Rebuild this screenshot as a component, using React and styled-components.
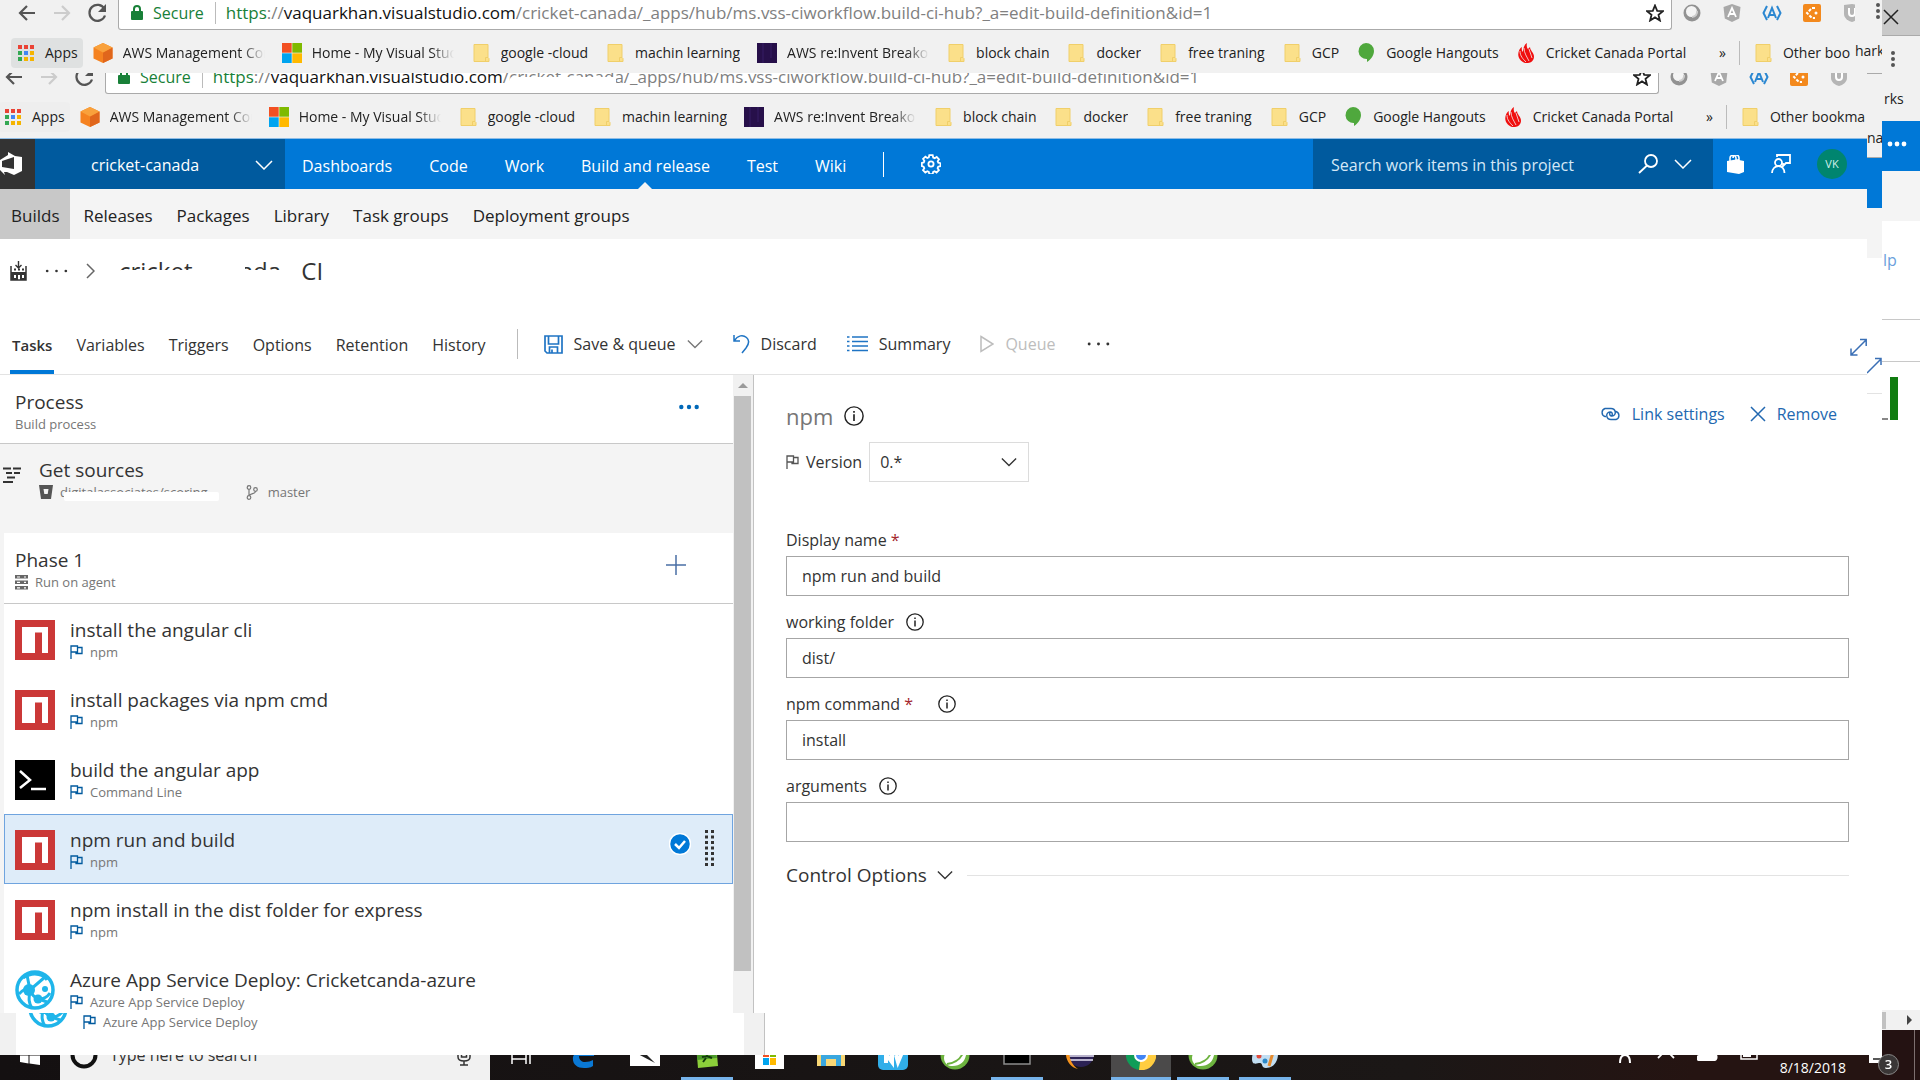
import React from "react";
import styled, { createGlobalStyle, css } from "styled-components";

const GlobalStyle = createGlobalStyle`
  *, *::before, *::after { box-sizing: border-box; }
  body { margin: 0; background: #fff; color: #333; font: 16px/22px "Open Sans", "Noto Sans", sans-serif; }
  button, input, select { font: inherit; color: inherit; }
  button { padding: 0; border: 0; background: none; display: inline-flex; align-items: center; }
  a { color: inherit; text-decoration: none; }
  svg { display: block; flex: none; }
`;

/* ---------- icons ---------- */
const Svg = ({ w = 20, h = w, box, children, ...rest }) => (
  <svg width={w} height={h} viewBox={box || `0 0 ${w} ${h}`} fill="none" stroke="currentColor" strokeWidth="1.5" aria-hidden="true" {...rest}>
    {children}
  </svg>
);
const Back = () => <Svg w={18} strokeWidth="2.2"><path d="M17 9H2M9 2 2 9l7 7" /></Svg>;
const Forward = () => <Svg w={18} strokeWidth="2.2"><path d="M1 9h15M9 2l7 7-7 7" /></Svg>;
const Reload = () => <Svg w={20} strokeWidth="2.2"><path d="M16.500 6A8 8 0 1 0 17 12.500" /><path d="M18 1v8h-8z" fill="currentColor" stroke="none" /></Svg>;
const Lock = () => <Svg w={12} h={16} stroke="none"><path d="M1 6h10a1 1 0 0 1 1 1v7a1 1 0 0 1-1 1H1a1 1 0 0 1-1-1V7a1 1 0 0 1 1-1z" fill="#188038" /><path d="M3 7V4a3 3 0 0 1 6 0v3" fill="none" stroke="#188038" strokeWidth="2" /></Svg>;
const Star = () => <Svg w={18} strokeWidth="1.800"><path d="m9 1.500 2.200 5.300 5.700.400-4.400 3.700 1.400 5.600L9 13.400l-4.900 3.100 1.400-5.600L1.100 7.200l5.700-.4z" /></Svg>;
const Dots = () => <Svg w={4} h={16} fill="currentColor" stroke="none"><circle cx="2" cy="2" r="2" /><circle cx="2" cy="8" r="2" /><circle cx="2" cy="14" r="2" /></Svg>;
const Globe = () => <Svg w={18} stroke="none"><circle cx="9" cy="9" r="8.500" fill="#929292" /><circle cx="8.500" cy="7.500" r="5.500" fill="#f4f4f4" /><path d="M9 13a5 5 0 0 0 5-6" stroke="#ccc" strokeWidth="2" fill="none" /></Svg>;
const Angular = () => <Svg w={18} stroke="none"><path d="M9 0l8.500 3-1.300 11.500L9 18l-7.200-3.500L.5 3z" fill="#a9a9a9" /><path d="M5 13 9 4l4 9M6.500 10h5" stroke="#fff" strokeWidth="1.800" /></Svg>;
const BraceA = () => <Svg w={20} h={18} stroke="#2b87d1" strokeWidth="2"><path d="M5 2 1.500 9 5 16M15 2l3.500 7L15 16M6 14l4-10 4 10M7.500 11h5" /></Svg>;
const Orange = () => <Svg w={18} stroke="none"><rect width="18" height="18" rx="2" fill="#f3891d" /><path d="M12 4H9L4 9l5 5h3" stroke="#fff" strokeWidth="2" strokeDasharray="3 1.500" /><circle cx="13" cy="9" r="1.500" fill="#fff" /></Svg>;
const Shield = () => <Svg w={18} stroke="none"><path d="M1 1l8-1 8 1v9c0 4-4 7-8 8-4-1-8-4-8-8z" fill="#b5b5b5" /><path d="M6 4v5a3 3 0 0 0 6 0V4" stroke="#fff" strokeWidth="2" /></Svg>;
const AppsGrid = () => (
  <Svg w={18} stroke="none">
    {["#ea4335", "#ea4335", "#ea4335", "#34a853", "#4285f4", "#f5b400", "#34a853", "#f5b400", "#f5b400"].map((c, i) => (
      <rect key={i} x={(i % 3) * 6 + 1} y={Math.floor(i / 3) * 6 + 1} width="4" height="4" fill={c} />
    ))}
  </Svg>
);
const Cube = () => <Svg w={20} stroke="none"><path d="m10 0 9.500 4.500v11L10 20 .5 15.500v-11z" fill="#f58220" /><path d="M10 9.500 19.500 4.500v11L10 20z" fill="#e0661c" /><path d="M10 0l9.500 4.500L10 9.500.5 4.500z" fill="#f9a13c" /></Svg>;
const MsLogo = ({ s = 20 }) => <Svg w={s} box="0 0 20 20" stroke="none"><path d="M0 0h9.700v9.700H0z" fill="#f25022" /><path d="M10.300 0H20v9.700h-9.700z" fill="#7fba00" /><path d="M0 10.300h9.700V20H0z" fill="#00a4ef" /><path d="M10.300 10.300H20V20h-9.700z" fill="#ffb900" /></Svg>;
const Folder = () => <Svg w={20} stroke="#f0cf6a" strokeWidth="1"><path d="M3 1.500h14v13l1 1v3H3z" fill="#fbe08a" /><path d="M14.500 18.500v-4h2.500" /></Svg>;
const Invent = () => <Svg w={20} stroke="none"><path d="M0 0h20v20H0z" fill="#27104a" /><path d="M6 0v20M14 0v15" stroke="#32195c" /></Svg>;
const Hangouts = () => <Svg w={20} stroke="none"><path d="M10 0a8 8 0 0 1 8 8c0 5-4 9-7 11v-3a8 8 0 0 1-1-16z" fill="#4fa83d" /></Svg>;
const Cricket = () => <Svg w={20} stroke="none"><path d="M9 20C-1 16 2 6 6 4c-1 4 1 5 1 5s0-7 4-9c-1 4 1 6 1 6l2-2c0 4 4 5 4 10 0 3-3 6-6 6z" fill="#f00f0f" /><path d="M4 8c0 5 3 8 6 11M8 5c0 5 3 9 5 13M13 6l3 9" stroke="#f1f1f1" strokeWidth=".8" /></Svg>;
const ChevronDown = ({ w = 18, ...p }) => <Svg w={w} h={10} box="0 0 18 10" {...p}><path d="m1 1 8 8 8-8" /></Svg>;
const ChevronRight = () => <Svg w={9} h={16} color="#666"><path d="m1 1 7 7-7 7" /></Svg>;
const Ellipsis = ({ w = 20, r = 2 }) => <Svg w={w} h={8} box="0 0 20 6" fill="currentColor" stroke="none"><circle cx="3" cy="3" r={r} /><circle cx="10" cy="3" r={r} /><circle cx="17" cy="3" r={r} /></Svg>;
const VsLogo = () => (
  <Svg w={24} h={24} stroke="none">
    <path fillRule="evenodd" d="M0 8 8 3V0l7 4 7 1v14l-8 4-7-3H4l1 3-5-5zm2 1v6l12 2V5z" fill="#fff" />
  </Svg>
);
const Gear = () => (
  <Svg w={20} strokeWidth="1.800">
    <circle cx="10" cy="10" r="2.600" />
    <path d="M8.300 1.200h3.400l.5 2.300 1.500.7 2-1.300 2.300 2.400-1.300 2 .6 1.400 2.200.5v3l-2.300.5-.6 1.500 1.300 2-2.300 2.300-2-1.300-1.400.7-.5 2.200H8.300l-.5-2.300-1.500-.6-2 1.300L2 16.200l1.300-2-.7-1.500L.8 12V9l2-.6.6-1.500-1.300-2L4.400 2.700l1.900 1.300 1.500-.6z" />
  </Svg>
);
const Search = () => <Svg w={20} strokeWidth="1.800"><circle cx="13" cy="7" r="6" /><path d="M9 11.500 1 19" /></Svg>;
const Bag = () => <Svg w={19} h={19} stroke="none"><path d="M1 6l12-2v15L1 17zM13 5l5 1v11l-5 2z" fill="#fff" /><path d="M4 6V3.500A3 3 0 0 1 10 3v2M7 3a3 3 0 0 1 6 0v3" stroke="#fff" strokeWidth="1.500" /></Svg>;
const Feedback = () => <Svg w={20} strokeWidth="1.800"><circle cx="7.500" cy="8.500" r="3.500" /><path d="M1 19c0-4 3-7 6.500-7s6 3 6 7M6 3V1h13v8h-4l-3 3V9" /></Svg>;
const BuildIcon = () => <Svg w={17} h={20} stroke="none"><path d="M8.500 0v6M5.500 4l3 3 3-3" stroke="#333" strokeWidth="1.400" /><path d="M1 5v14h15V5" stroke="#333" strokeWidth="1.500" /><path fillRule="evenodd" d="M1 11h15v8H1zm3 3v3h2v-3zm4 0v5h2v-5zm4 0v3h2v-3z" fill="#333" /><path d="M4 8.500h2M8 8.500h2M12 8.500h2" stroke="#333" strokeWidth="2" /></Svg>;
const Save = () => <Svg w={19} strokeWidth="1.700"><path d="M1 1h17v17H3l-2-2zM4.500 1v8h10V1M5.500 18v-6h8v6M8 14.500V18" /></Svg>;
const Undo = () => <Svg w={17} h={20}><path d="M1 1v6h6M1 7C5 1 10 .5 13.500 3.500S16 10 13 14l-4 5" /></Svg>;
const List = () => <Svg w={21} h={16}><path d="M5 1h16M5 5.500h16M5 10h16M5 14.500h16M0 1h2.500M0 5.500h2.500M0 10h2.500M0 14.500h2.500" /></Svg>;
const Play = () => <Svg w={14} h={18}><path d="M1 1.500 13 9 1 16.500z" /></Svg>;
const Expand = () => <Svg w={17} h={18}><path d="M1 17 16 2M10 1.500h6.200V8M1 10.500V17h6.500" /></Svg>;
const Sources = () => <Svg w={18} h={16} strokeWidth="1.800" color="#333"><path d="M0 1.500h8M10 1.500h8M3 6h6M11 6h6M4 10.500h8M0 15h10" /></Svg>;
const Bucket = () => <Svg w={14} h={14} stroke="none"><path fillRule="evenodd" d="M0 0h14l-2 14H2zm4.500 4 .8 5h3.400l.8-5z" fill="#555" /></Svg>;
const Branch = () => <Svg w={12} h={15} strokeWidth="1.200" color="#777"><circle cx="3" cy="2.500" r="1.800" /><circle cx="3" cy="12.500" r="1.800" /><circle cx="9.500" cy="4.500" r="1.800" /><path d="M3 4.500v6M9.500 6.500C9 9 5 8 3 10.500" /></Svg>;
const Agent = () => <Svg w={13} h={15} stroke="none"><path d="M0 0h13v3.500H0zM0 5.500h13V9H0zM0 11h13v3.500H0z" fill="#666" /><path d="M2 2h3M2 7.300h3M2 12.800h3M9 2h2M9 7.300h2M9 12.800h2" stroke="#fff" strokeWidth="1.200" /></Svg>;
const Plus = () => <Svg w={20}><path d="M10 0v20M0 10h20" /></Svg>;
const Flag = ({ c = "#005a9e" }) => <Svg w={13} h={14} color={c} strokeWidth="1.300"><path d="M1 14V1h6.500v6H1M7.500 2.500H12v6H6V7" /></Svg>;
const Info = ({ w = 18 }) => <Svg w={w} box="0 0 18 18" strokeWidth="1.300" color="#222"><circle cx="9" cy="9" r="8.200" /><path d="M9 7.500v6M9 4.500v1.600" strokeWidth="1.500" /></Svg>;
const Link = () => <Svg w={21} h={14} strokeWidth="1.400"><path d="M6 9.500H5a4.200 4.200 0 0 1 0-8h6c5 0 6 7 1 7.500-3 0-3-4-.5-4M15 4.500h1a4.200 4.200 0 0 1 0 8h-5c-5 0-6-7-1-7.500 3 0 3 4 .5 4" /></Svg>;
const Cross = () => <Svg w={16}><path d="m1 1 14 14M15 1 1 15" /></Svg>;
const Npm = () => <Svg w={40} stroke="none"><path d="M0 0h40v40H0z" fill="#cb3837" /><path d="M7 7h26v26H7z" fill="#fff" /><path d="M20 12.500h7V33h-7z" fill="#cb3837" /></Svg>;
const Cmd = () => <Svg w={40} stroke="none"><path d="M0 0h40v40H0z" fill="#000" /><path d="m5 11 10 9-10 8" stroke="#fff" strokeWidth="2.500" /><path d="M16 29h15" stroke="#fff" strokeWidth="2.500" /></Svg>;
const AzureApp = () => (
  <Svg w={40} stroke="none">
    <circle cx="20" cy="20" r="18" stroke="#1fb5ea" strokeWidth="3.500" fill="#fff" />
    <path d="M8 8C20 0 30 6 32 10M4 24C8 20 10 18 15 20L30 7M15 20c2 6 6 8 9 9 5 0 9-3 11-6M15 20 12 5M15 20c-1 8-2 12 2 18M24 29l8 3" stroke="#1fb5ea" strokeWidth="3" />
    <circle cx="14" cy="20" r="6" fill="#1fb5ea" /><circle cx="23" cy="29" r="4.500" fill="#1fb5ea" /><circle cx="30" cy="19" r="3" fill="#1fb5ea" />
  </Svg>
);
const Checked = () => <Svg w={22} stroke="none"><circle cx="11" cy="11" r="10.500" fill="#0078d7" stroke="#fff" /><path d="m6 11 4 4 6-7" stroke="#fff" strokeWidth="2.500" /></Svg>;
const Grip = () => <Svg w={9} h={36} strokeWidth="3" strokeDasharray="3 2.500" color="#333"><path d="M1.500 0v36M7.500 0v36" /></Svg>;
const CornerArrow = () => <Svg w={15} h={18}><path d="M0 16 14 2M8 1.500h6V8" /></Svg>;
const Caret = () => <Svg w={18} h={10} strokeWidth="1.800"><path d="m1 9 8-8 8 8" /></Svg>;

/* ---------- desktop layers ---------- */
const Desktop = styled.div`
  display: flex;
  min-height: 100vh;
  overflow: hidden;
`;
const Layers = styled.div`
  flex: 1;
  min-width: 0;
  display: flex;
  flex-direction: column;
`;
const LayerRow = styled.div`
  display: flex;
  flex: ${(p) => (p.$grow ? "1" : "none")};
  height: ${(p) => (p.$h ? p.$h + "px" : "auto")};
  min-width: 0;
`;
const Clip = styled.div`
  flex: ${(p) => (p.$row ? "1" : "none")};
  min-width: 0;
  overflow: hidden;
`;
const Front = styled.main`
  flex: 1;
  min-width: 0;
  display: flex;
  flex-direction: column;
`;
const Strip = styled.div`
  flex: none;
  width: ${(p) => p.$w}px;
  overflow: hidden;
  display: flex;
  flex-direction: column;
  white-space: nowrap;
  background: #fff;
`;
const Cell = styled.div`
  flex: ${(p) => (p.$h ? "none" : "1")};
  height: ${(p) => (p.$h ? p.$h + "px" : "auto")};
  padding: ${(p) => p.$pad || 0};
  background: ${(p) => p.$bg || "transparent"};
  color: ${(p) => p.$c || "#222"};
  display: flex;
  align-items: ${(p) => p.$align || "center"};
  justify-content: ${(p) => p.$justify || "center"};
  border-bottom: ${(p) => (p.$line ? `1px solid ${p.$line}` : "0")};
  font-size: ${(p) => p.$size || 14}px;
  overflow: hidden;
`;
const Dash = styled.span`
  width: 6px;
  height: 2px;
  background: #888;
`;
const GreenBar = styled.span`
  width: 8px;
  height: 43px;
  margin-left: 2px;
  background: #107c10;
`;
const EdgeThumb = styled.span`
  width: 4px;
  height: 17px;
  background: #c1c1c1;
`;
const EdgeArrow = styled.span`
  border: 5px solid transparent;
  border-left-color: #444;
  border-right: 0;
`;
const Eraser = styled.span`
  position: absolute;
  left: ${(p) => p.$x}px;
  top: ${(p) => p.$y}px;
  width: ${(p) => p.$w}px;
  height: ${(p) => p.$h}px;
  background: #fff;
  border-radius: 2px;
`;
const Rule = styled.span`
  width: 1px;
  height: ${(p) => p.$h}px;
  background: ${(p) => p.$c || "#bbb"};
`;

/* ---------- browser chrome ---------- */
const Chrome = styled.div`
  width: calc(100% + ${(p) => p.$spill}px);
  margin: ${(p) => (p.$shifted ? "-9px 0 0 -13px" : "0")};
  background: #f1f1f1;
  color: #222;
`;
const AddressRow = styled.div`
  height: 30px;
  display: flex;
  align-items: flex-start;
  padding-left: 18px;
`;
const NavButton = styled.button`
  width: 35px;
  height: 26px;
  color: ${(p) => (p.$dim ? "#ccc" : "#555")};
`;
const AddressBox = styled.div`
  flex: 1;
  min-width: 0;
  height: 30px;
  margin-left: -5px;
  padding: 0 7px 4px 12px;
  display: flex;
  align-items: center;
  gap: 10px;
  background: #fff;
  border: 1px solid #aaa;
  border-top: 0;
  border-radius: 0 0 3px 3px;
  white-space: nowrap;
  overflow: hidden;
`;
const Secure = styled.span`
  color: #188038;
  padding-right: 11px;
  border-right: 1px solid #bbb;
`;
const Url = styled.span`
  position: relative;
  flex: 1;
  font-size: 17px;
  color: #808080;
  b { font-weight: 400; color: #111; }
  i { font-style: normal; color: #188038; }
`;
const Extensions = styled.div`
  display: flex;
  width: 208px;
  height: 26px;
`;
const ExtButton = styled.button`
  width: 40px;
  justify-content: center;
`;
const Bookmarks = styled.nav`
  height: 44px;
  padding: 2px 0 0 11px;
  display: flex;
  align-items: center;
  gap: 17px;
  font-size: 14px;
  white-space: nowrap;
`;
const Bookmark = styled.a`
  display: flex;
  align-items: center;
  gap: 10px;
  color: #222;
  ${(p) => p.$pill && css`
    padding: 4px 5px 4px 6px;
    margin-right: -7px;
    border-radius: 4px;
    background: ${p.$pill};
  `}
`;
const Fade = styled.span`
  width: ${(p) => (p.$cut ? "142px" : "auto")};
  overflow: hidden;
  ${(p) => p.$cut && css`mask-image: linear-gradient(90deg, #000 84%, transparent);`}
`;
const OtherBookmarks = styled.div`
  margin-left: auto;
  width: 161px;
  display: flex;
  align-items: center;
  gap: 13px;
`;

const bookmarks = [
  [Cube, "AWS Management Console", true],
  [MsLogo, "Home - My Visual Studio", true],
  [Folder, "google -cloud"],
  [Folder, "machin learning"],
  [Invent, "AWS re:Invent Breakout", true],
  [Folder, "block chain"],
  [Folder, "docker"],
  [Folder, "free traning"],
  [Folder, "GCP"],
  [Hangouts, "Google Hangouts"],
  [Cricket, "Cricket Canada Portal"],
];

const BrowserChrome = ({ shifted, spill, other }) => (
  <Chrome $shifted={shifted} $spill={spill}>
    <AddressRow>
      <NavButton aria-label="Back"><Back /></NavButton>
      <NavButton aria-label="Forward" $dim><Forward /></NavButton>
      <NavButton aria-label="Reload"><Reload /></NavButton>
      <AddressBox>
        <Lock />
        <Secure>Secure</Secure>
        <Url>
          <i>https</i>://<b>vaquarkhan.visualstudio.com</b>/cricket-canada/_apps/hub/ms.vss-ciworkflow.build-ci-hub?_a=edit-build-definition&amp;id=1
          {shifted && <Eraser $x={297} $y={11} $w={106} $h={13} />}
        </Url>
        <Star />
      </AddressBox>
      <Extensions>
        {[Globe, Angular, BraceA, Orange, Shield].map((Icon, i) => (
          <ExtButton key={i} aria-label={`Extension ${i + 1}`}><Icon /></ExtButton>
        ))}
      </Extensions>
    </AddressRow>
    <Bookmarks>
      <Bookmark href="#apps" $pill={shifted ? "#eeeeee" : "#dfe1e1"}><AppsGrid /><span>Apps</span></Bookmark>
      {bookmarks.map(([Icon, label, cut]) => (
        <Bookmark key={label} href="#bookmark"><Icon /><Fade $cut={cut}>{label}</Fade></Bookmark>
      ))}
      <OtherBookmarks>
        <span>»</span>
        <Rule $h={24} />
        <Bookmark href="#other"><Folder /><span>{other}</span></Bookmark>
      </OtherBookmarks>
    </Bookmarks>
  </Chrome>
);

/* ---------- hub header ---------- */
const Header = styled.header`
  height: 51px;
  display: flex;
  align-items: stretch;
  background: #0078d7;
  border-top: 1px solid #8fbde6;
  color: #fff;
`;
const Logo = styled.a`
  width: 35px;
  display: flex;
  align-items: center;
  background: #333;
`;
const Project = styled.button`
  && { color: #fff; }
  width: 250px;
  padding: 2px 12px 0 56px;
  justify-content: space-between;
  background: #005a9e;
`;
const HubNav = styled.nav`
  display: flex;
  align-items: center;
  gap: 37px;
  padding-left: 17px;
`;
const HubLink = styled.a`
  height: 50px;
  line-height: 54px;
  position: relative;
  ${(p) => p.$active && css`
    &::after {
      content: "";
      position: absolute;
      left: calc(50% - 7px);
      bottom: 0;
      border: 7px solid transparent;
      border-top-width: 0;
      border-bottom-color: #f4f4f4;
    }
  `}
`;
const WorkSearch = styled.label`
  margin-left: auto;
  width: 400px;
  padding: 0 21px 0 18px;
  display: flex;
  align-items: center;
  gap: 16px;
  background: #005a9e;
  input {
    flex: 1;
    min-width: 0;
    padding: 2px 0 0;
    border: 0;
    background: none;
    outline: 0;
  }
  input::placeholder { color: #d5e8f7; opacity: 1; }
`;
const HeaderTools = styled.div`
  width: 154px;
  display: flex;
  align-items: center;
  gap: 26px;
  padding-left: 13px;
  button { color: #fff; }
`;
const Avatar = styled.span`
  width: 30px;
  height: 30px;
  border-radius: 50%;
  background: #00856f;
  color: #d2f0ea;
  font-size: 11px;
  display: grid;
  place-items: center;
`;
const SubNav = styled.nav`
  height: 50px;
  display: flex;
  background: #f4f4f4;
  color: #222;
  font-size: 17px;
`;
const SubLink = styled.a`
  padding: 0 12px;
  line-height: 53px;
  &:first-child { padding: 0 10px 0 11px; margin-right: 2px; background: #c8c8c8; }
`;

/* ---------- definition title and tabs ---------- */
const Crumbs = styled.div`
  height: 65px;
  padding: 0 10px 2px;
  display: flex;
  align-items: center;
  gap: 16px;
`;
const CrumbTitle = styled.h1`
  position: relative;
  margin: 0 0 0 8px;
  font-size: 24px;
  line-height: 30px;
  font-weight: 400;
`;
const Toolbar = styled.div`
  height: 71px;
  padding-left: 10px;
  display: flex;
  align-items: stretch;
  border-bottom: 1px solid #e3e3e3;
`;
const Tab = styled.button`
  padding: 12px 2px 0;
  margin-right: 20px;
  border: solid transparent;
  border-width: 4px 0;
  ${(p) => p.$active && css`
    font-weight: 600;
    font-size: 15px;
    border-bottom-color: #0078d7;
  `}
`;
const Actions = styled.div`
  display: flex;
  align-items: center;
  gap: 30px;
  height: 30px;
  margin: 25px 0 0 9px;
  padding-left: 26px;
  border-left: 1px solid #bbb;
`;
const Action = styled.button`
  gap: 11px;
  ${(p) => p.$off && css`&& { color: #bdbdbd; }`}
  svg:first-child { color: ${(p) => (p.$off ? "#bdbdbd" : p.$c || "#1f74c4")}; }
`;
const ExpandButton = styled.button`
  margin-left: auto;
  padding-top: 16px;
  && { color: #3a6fb5; }
`;

/* ---------- split view ---------- */
const Split = styled.div`
  flex: 1;
  display: flex;
  align-items: stretch;
`;
const Pane = styled.section`
  width: 733px;
  height: 638px;
  overflow: hidden;
  background: #f4f4f4;
`;
const Block = styled.div`
  height: ${(p) => p.$h}px;
  padding: ${(p) => p.$pad};
  margin-left: ${(p) => p.$inset || 0}px;
  display: flex;
  align-items: flex-start;
  gap: ${(p) => p.$gap || 0}px;
  background: ${(p) => p.$bg || "#fff"};
  border-bottom: ${(p) => (p.$flat ? "0" : "1px solid #c8c8c8")};
`;
const Texts = styled.div`
  flex: 1;
  min-width: 0;
`;
const SourcesSlot = styled.span`
  padding-top: 8px;
`;
const Title = styled.div`
  font-size: 19px;
  line-height: 22px;
  color: #333;
`;
const Sub = styled.div`
  position: relative;
  height: 22px;
  display: flex;
  align-items: center;
  gap: 7px;
  font-size: 13px;
  color: #767676;
`;
const BranchName = styled.span`
  display: flex;
  align-items: center;
  gap: 10px;
  margin-left: 31px;
`;
const Tool = styled.button`
  height: 32px;
  && { color: ${(p) => p.$c || "#0068b8"}; }
`;
const Task = styled.div`
  height: 70px;
  margin-left: 4px;
  padding: 15px 18px 15px 10px;
  display: flex;
  gap: 15px;
  border: 1px solid ${(p) => (p.$on ? "#6fa4df" : "#fff")};
  background: ${(p) => (p.$on ? "#deecf9" : "#fff")};
`;
const TaskMarks = styled.div`
  display: flex;
  align-items: flex-start;
  gap: 14px;
  svg:first-child { margin-top: 3px; }
`;
const TaskText = styled(Texts)`
  margin-top: -1px;
`;
const Scroll = styled.div`
  width: 21px;
  padding: 0 2px 42px 1px;
  display: flex;
  flex-direction: column;
  align-items: center;
  background: #f1f1f1;
  border-right: 1px solid #c2c2c2;
`;
const ScrollArrow = styled.span`
  margin: 8px 0 8px;
  border: 5px solid transparent;
  border-top: 0;
  border-bottom-color: #9a9a9a;
`;
const Thumb = styled.span`
  flex: 1;
  width: 17px;
  background: #c1c1c1;
`;
const Details = styled.section`
  flex: 1;
  min-width: 0;
  padding: 28px 18px 0 32px;
`;
const DetailHead = styled.div`
  height: 26px;
  display: flex;
  align-items: center;
  gap: 11px;
`;
const DetailTitle = styled.h2`
  margin: 0;
  font-size: 22px;
  line-height: 26px;
  font-weight: 400;
  color: #767676;
`;
const DetailLinks = styled.div`
  margin-left: auto;
  padding: 0 12px 4px 0;
  display: flex;
  gap: 25px;
  button { gap: 11px; color: #2268b0; }
`;
const VersionRow = styled.div`
  margin-top: 13px;
  height: 40px;
  display: flex;
  align-items: center;
  gap: 7px;
`;
const SelectWrap = styled.span`
  position: relative;
  width: 160px;
  select {
    width: 100%;
    height: 40px;
    padding: 0 10px;
    appearance: none;
    background: #fff;
    border: 1px solid #dcdcdc;
  }
  svg { position: absolute; right: 12px; top: 15px; pointer-events: none; }
`;
const Form = styled.div`
  margin-top: 46px;
`;
const Field = styled.div`
  height: 82px;
`;
const FieldLabel = styled.label`
  height: 28px;
  display: flex;
  align-items: center;
  padding-bottom: 5px;
  gap: ${(p) => (p.$wide ? 25 : 12)}px;
  em { font-style: normal; color: #a4262c; }
`;
const TextBox = styled.input`
  width: 100%;
  height: 40px;
  padding: 0 15px;
  border: 1px solid #a6a6a6;
  background: #fff;
`;
const More = styled.div`
  display: flex;
  align-items: center;
  gap: 14px;
  margin-top: 8px;
  button { font-size: 19px; gap: 10px; }
  &::after { content: ""; flex: 1; height: 1px; background: #e3e3e3; }
`;
const UnderLayer = styled.div`
  height: 42px;
  padding-left: 16px;
  display: flex;
  background: linear-gradient(90deg, #f1f1f1 16px, #fff 16px);
`;
const UnderTask = styled.div`
  width: 728px;
  height: 42px;
  padding-left: 12px;
  display: flex;
  gap: 15px;
  overflow: hidden;
  svg:first-child { margin-top: -25px; }
`;
const UnderSub = styled(Sub)`
  height: 17px;
  && svg:first-child { margin-top: 0; }
`;
const UnderScroll = styled.div`
  width: 21px;
  background: #f1f1f1;
  border-right: 1px solid #c2c2c2;
`;

/* ---------- taskbar ---------- */
const TaskbarClip = styled.footer`
  height: 25px;
  overflow: hidden;
`;
const Taskbar = styled.div`
  height: 50px;
  margin-top: -25px;
  display: flex;
  background: linear-gradient(90deg, #141011, #1b1716 75%, #251412 90%);
  color: #fff;
`;
const StartButton = styled.button`
  width: 60px;
  justify-content: center;
`;
const TaskSearch = styled.label`
  width: 430px;
  padding: 0 19px 0 10px;
  display: flex;
  align-items: center;
  gap: 12px;
  background: #f1f1f1;
  input { flex: 1; min-width: 0; padding: 0; border: 0; background: none; outline: 0; }
  input::placeholder { color: #333; opacity: 1; }
`;
const TaskItem = styled.button`
  width: 62px;
  justify-content: center;
  background: ${(p) => (p.$on ? "#4b4a4a" : "none")};
  box-shadow: ${(p) => (p.$run ? "inset 0 -3px 0 #76b3ea" : "none")};
  background-clip: padding-box;
  border: solid transparent;
  border-width: 0 ${(p) => (p.$on ? 1 : 5)}px;
`;
const Tray = styled.div`
  margin-left: auto;
  display: flex;
  align-items: center;
  gap: 22px;
  padding-bottom: 3px;
  button { color: #fff; }
`;
const Clock = styled.time`
  height: 50px;
  padding-top: 3px;
  font-size: 14px;
  line-height: 24px;
  white-space: pre-line;
  text-align: center;
`;
const Notice = styled.button`
  width: 14px;
  height: 26px;
  overflow: hidden;
`;
const Badge = styled.span`
  position: fixed;
  right: 21px;
  bottom: 5px;
  width: 21px;
  height: 21px;
  border: 1px solid #888;
  border-radius: 50%;
  background: #3a3636;
  color: #fff;
  font-size: 13px;
  font-weight: 600;
  line-height: 19px;
  text-align: center;
`;

const Windows = () => <Svg w={20} stroke="none"><path d="M0 3l8.500-1.300V9.500H0zM9.500 1.500 20 0v9.500H9.500zM0 10.500h8.500v8L0 17zM9.500 10.500H20V20L9.500 18.500z" fill="#fff" /></Svg>;
const Ring = () => <Svg w={28} color="#111" strokeWidth="4"><circle cx="14" cy="14" r="11.500" /></Svg>;
const Mic = () => <Svg w={14} h={22} color="#333"><path d="M4.500 1h5v12h-5zM1 8v5c0 3 2 4 6 4s6-1 6-4V8M7 17v4M3 21h8" /></Svg>;
const TaskView = () => <Svg w={20}><path d="M1 1v18M15 1v18M1 5h14M1 14h14M19 1v18" /></Svg>;
const Edge = () => <Svg w={24} h={26} stroke="none"><path d="M1 12C2 4 7 0 13 0c7 0 11 6 10 14H8c0 4 3 6 6 6s6-1 8-2v6c-3 2-6 2-9 2-7 0-12-4-11-11 1-3 3-5 6-6-1 1-1 2-1 2h9c0-3-1-5-5-5-5 0-9 3-12 6z" fill="#0a78d4" /></Svg>;
const Bolt = () => <Svg w={30} h={24} stroke="none"><path d="M0 0h30v23H0z" fill="#fff" /><path d="m6 10 19 10-9-9z" fill="#222" /></Svg>;
const Notes = () => <Svg w={24} h={26} stroke="none"><path d="M1 3l20-2 2 23-20 2z" fill="#8ccf3a" /><path d="M2 10h19l1 6-20 2z" fill="#4d9a2b" /><path d="M6 9l6 4 6-4M7 15l5-1 5 2M8 20l3-4" stroke="#123a0c" strokeWidth="2" /></Svg>;
const Store = () => <Svg w={30} h={28} stroke="none"><path d="M1 0h29v28H1z" fill="#fff" /><path d="M9 9h6v7H9z" fill="#f25022" /><path d="M16 9h6v7h-6z" fill="#7fba00" /><path d="M9 17h6v7H9z" fill="#00a4ef" /><path d="M16 17h6v7h-6z" fill="#ffb900" /></Svg>;
const Explorer = () => <Svg w={28} h={22} stroke="none"><path d="M0 1h28v21H0z" fill="#f8d775" /><path d="M4 8h20v14h-5v-7H9v7H4z" fill="#3aa7df" /></Svg>;
const Vapp = () => <Svg w={30} stroke="none"><rect width="30" height="30" rx="5" fill="#31aee9" /><path d="M8 8v15M8 14l6 8V8M25 10l-5 12-2-7" stroke="#fff" strokeWidth="4" /></Svg>;
const Spring = () => <Svg w={30} stroke="none"><circle cx="15" cy="15" r="14.500" fill="#6db33f" /><path d="M4 18C4 8 18 10 25 5c4 12-2 22-14 21-4 0-7-4-7-8z" fill="#fff" /><path d="M7 24c8-1 14-4 17-14" stroke="#6db33f" strokeWidth="2" /></Svg>;
const Terminal = () => <Svg w={28} h={22}><path d="M1 1h26v19H1z" fill="#000" stroke="#8c8c8c" /></Svg>;
const Eclipse = () => <Svg w={30} stroke="none"><circle cx="17" cy="14" r="13" fill="#2c2255" /><path d="M4 12h26M4 16h26M5 20h24" stroke="#e7e4f4" strokeWidth="1.500" /><path d="M8 2C-3 9 2 27 14 29 5 23 3 12 8 2z" fill="#f7941e" /></Svg>;
const ChromeLogo = () => <Svg w={30} stroke="none"><path d="M15 15 2 7.500a15 15 0 0 1 26 0z" fill="#db4437" /><path d="M15 15v15A15 15 0 0 1 2 7.500z" fill="#0f9d58" /><path d="M15 15 28 7.500A15 15 0 0 1 13 30z" fill="#ffcd40" /><circle cx="15" cy="15" r="6" fill="#4285f4" stroke="#fff" strokeWidth="2" /></Svg>;
const Paint = () => <Svg w={28} stroke="none"><path d="M14 1c8 0 13 5 13 12s-4 14-12 14c-5 0-3-5-6-5s-8 3-8-4S6 1 14 1z" fill="#c2def2" /><circle cx="8" cy="15" r="2.500" fill="#e24a3b" /><circle cx="14" cy="20" r="2.500" fill="#2d89c8" /><path d="m25 1-7 24" stroke="#e58b2f" strokeWidth="3" /></Svg>;
const Person = () => <Svg w={20} strokeWidth="2"><circle cx="10" cy="7" r="4" /><path d="M5 19c0-5 2-8 5-8s5 3 5 8M15 4c2 0 3 1 4 4" /></Svg>;
const Cloud = () => <Svg w={21} h={14} stroke="none"><path d="M3 14a3 3 0 0 1-1-6c0-3 3-5 5-4 2-5 9-5 10 1 4 1 5 8 1 9z" fill="#fff" /></Svg>;
const Battery = () => <Svg w={18} h={12}><path d="M1 1h16v10H1z" /><path d="M3 3h8v6H3z" fill="#fff" stroke="none" /></Svg>;
const Note = () => <Svg w={28} h={26} stroke="none"><path d="M1 4h27v18H14l-3 4v-4H1z" fill="#fff" /><path d="M13 9h9M5 18h9" stroke="#222" strokeWidth="1.500" /></Svg>;

const taskIcons = [
  [TaskView, "Task View"], [Edge, "Edge"], [Bolt, "App"], [Notes, "Notes", true], [Store, "Store"], [Explorer, "Files"],
  [Vapp, "Editor"], [Spring, "Spring"], [Terminal, "Terminal", true], [Eclipse, "Eclipse"], [ChromeLogo, "Chrome", true, true],
  [Spring, "Spring Tools", true], [Paint, "Paint", true],
];
const tasks = [
  [Npm, "install the angular cli", "npm"],
  [Npm, "install packages via npm cmd", "npm"],
  [Cmd, "build the angular app", "Command Line"],
  [Npm, "npm run and build", "npm", true],
  [Npm, "npm install in the dist folder for express", "npm"],
  [AzureApp, "Azure App Service Deploy: Cricketcanda-azure", "Azure App Service Deploy"],
];
const fields = [
  { id: "name", label: "Display name", required: true, value: "npm run and build" },
  { id: "folder", label: "working folder", info: true, value: "dist/" },
  { id: "command", label: "npm command", required: true, info: true, value: "install" },
  { id: "args", label: "arguments", info: true, value: "" },
];

export default function App() {
  return (
    <>
      <GlobalStyle />
      <Desktop>
        <Layers>
          <LayerRow $h={73}>
            <Clip $row><BrowserChrome spill={25} other="Other boo" /></Clip>
            <Strip $w={27}>
              <Cell $h={29} $pad="3px 2px 0 0" $bg="#f1f1f1" $justify="flex-end" $align="flex-start" $c="#555"><Dots /></Cell>
              <Cell $h={44} $bg="#f1f1f1" $justify="flex-start">harks</Cell>
            </Strip>
          </LayerRow>
          <LayerRow $grow>
            <Front>
              <Clip><BrowserChrome shifted spill={13} other="Other bookma" /></Clip>
              <Header>
                <Logo href="#home" aria-label="Home"><VsLogo /></Logo>
                <Project>cricket-canada<ChevronDown /></Project>
                <HubNav>
                  {["Dashboards", "Code", "Work", "Build and release", "Test", "Wiki"].map((t) => (
                    <HubLink key={t} href="#hub" $active={t === "Build and release"}>{t}</HubLink>
                  ))}
                  <Rule $h={25} $c="#fff" />
                  <Gear />
                </HubNav>
                <WorkSearch>
                  <input aria-label="Search work items" placeholder="Search work items in this project" />
                  <Search />
                  <ChevronDown />
                </WorkSearch>
                <HeaderTools>
                  <button aria-label="Marketplace"><Bag /></button>
                  <button aria-label="Feedback"><Feedback /></button>
                  <Avatar>VK</Avatar>
                </HeaderTools>
              </Header>
              <SubNav>
                {["Builds", "Releases", "Packages", "Library", "Task groups", "Deployment groups"].map((t) => (
                  <SubLink key={t} href="#sub">{t}</SubLink>
                ))}
              </SubNav>
              <Crumbs>
                <BuildIcon />
                <Ellipsis w={27} r={1} />
                <ChevronRight />
                <CrumbTitle>
                  cricket-canada - CI
                  <Eraser $x={0} $y={14} $w={179} $h={14} />
                  <Eraser $x={76} $y={3} $w={50} $h={24} />
                </CrumbTitle>
              </Crumbs>
              <Toolbar>
                {["Tasks", "Variables", "Triggers", "Options", "Retention", "History"].map((t) => (
                  <Tab key={t} $active={t === "Tasks"}>{t}</Tab>
                ))}
                <Actions>
                  <Action><Save />Save &amp; queue<ChevronDown w={16} color="#777" /></Action>
                  <Action><Undo />Discard</Action>
                  <Action><List />Summary</Action>
                  <Action $off><Play />Queue</Action>
                  <Action aria-label="More" $c="#333"><Ellipsis w={27} r={1.1} /></Action>
                </Actions>
                <ExpandButton aria-label="Expand"><Expand /></ExpandButton>
              </Toolbar>
              <Split>
                <Pane>
                  <Block $h={69} $pad="16px 33px 0 15px">
                    <Texts><Title>Process</Title><Sub>Build process</Sub></Texts>
                    <Tool aria-label="Process menu"><Ellipsis w={22} r={2} /></Tool>
                  </Block>
                  <Block $h={89} $pad="15px 33px 0 3px" $bg="#f4f4f4" $gap={18} $flat>
                    <SourcesSlot><Sources /></SourcesSlot>
                    <Texts>
                      <Title>Get sources</Title>
                      <Sub>
                        <Bucket /><span>digitalassociates/scoring</span>
                        <Eraser $x={25} $y={11} $w={155} $h={9} />
                        <BranchName><Branch />master</BranchName>
                      </Sub>
                    </Texts>
                  </Block>
                  <Block $h={71} $pad="16px 47px 0 11px" $inset={4}>
                    <Texts><Title>Phase 1</Title><Sub><Agent />Run on agent</Sub></Texts>
                    <Tool aria-label="Add task" $c="#4a6fa5"><Plus /></Tool>
                  </Block>
                  {tasks.map(([Icon, title, kind, on]) => (
                    <Task key={title} $on={on}>
                      <Icon />
                      <TaskText><Title>{title}</Title><Sub><Flag />{kind}</Sub></TaskText>
                      {on && <TaskMarks><Checked /><Grip /></TaskMarks>}
                    </Task>
                  ))}
                </Pane>
                <Scroll><ScrollArrow /><Thumb /></Scroll>
                <Details>
                  <DetailHead>
                    <DetailTitle>npm</DetailTitle>
                    <Info w={20} />
                    <DetailLinks>
                      <button><Link />Link settings</button>
                      <button><Cross />Remove</button>
                    </DetailLinks>
                  </DetailHead>
                  <VersionRow>
                    <Flag c="#555" />
                    <label htmlFor="version">Version</label>
                    <SelectWrap>
                      <select id="version" defaultValue="0"><option value="0">0.*</option></select>
                      <ChevronDown w={16} />
                    </SelectWrap>
                  </VersionRow>
                  <Form>
                    {fields.map((f) => (
                      <Field key={f.id}>
                        <FieldLabel htmlFor={f.id} $wide={f.required}>
                          <span>{f.label} {f.required && <em>*</em>}</span>
                          {f.info && <Info />}
                        </FieldLabel>
                        <TextBox id={f.id} defaultValue={f.value} />
                      </Field>
                    ))}
                  </Form>
                  <More><button>Control Options<ChevronDown w={16} /></button></More>
                </Details>
              </Split>
              <UnderLayer>
                <UnderTask><AzureApp /><UnderSub><Flag />Azure App Service Deploy</UnderSub></UnderTask>
                <UnderScroll />
              </UnderLayer>
            </Front>
            <Strip $w={15}>
              <Cell $h={1} $bg="#aaa" />
              <Cell $h={45} $bg="#f1f1f1" />
              <Cell $h={39} $bg="#f1f1f1" $justify="flex-start" $line="#aaa">narks</Cell>
              <Cell $h={50} $bg="#0078d7" />
              <Cell $h={50} $bg="#f4f4f4" />
              <Cell $h={136} $pad="0 0 18px" $c="#3a6fb5" $align="flex-end" $justify="flex-end" $line="#e3e3e3"><CornerArrow /></Cell>
              <Cell />
            </Strip>
          </LayerRow>
          <TaskbarClip>
            <Taskbar>
              <StartButton aria-label="Start"><Windows /></StartButton>
              <TaskSearch>
                <Ring />
                <input aria-label="Type here to search" placeholder="Type here to search" />
                <Mic />
              </TaskSearch>
              {taskIcons.map(([Icon, name, run, on]) => (
                <TaskItem key={name} aria-label={name} $run={run} $on={on}><Icon /></TaskItem>
              ))}
              <Tray>
                <button aria-label="People"><Person /></button>
                <button aria-label="Hidden icons"><Caret /></button>
                <button aria-label="OneDrive"><Cloud /></button>
                <button aria-label="Battery"><Battery /></button>
                <Clock>{"\n8/18/2018"}</Clock>
                <Notice aria-label="Notifications"><Note /></Notice>
              </Tray>
            </Taskbar>
          </TaskbarClip>
        </Layers>
        <Strip $w={38}>
          <Cell $h={36} $pad="0 0 2px 1px" $bg="#c9c9c9" $line="#aaa" $justify="flex-start"><Cross /></Cell>
          <Cell $h={46} $pad="0 16px 0 0" $bg="#f1f1f1" $c="#555"><Dots /></Cell>
          <Cell $h={39} $pad="6px 0 0 2px" $bg="#f1f1f1" $justify="flex-start" $align="flex-start">rks</Cell>
          <Cell $h={50} $pad="0 8px 4px 0" $bg="#0078d7" $c="#fff"><Ellipsis w={20} r={2.4} /></Cell>
          <Cell $h={50} $bg="#f4f4f4" />
          <Cell $h={99} $pad="28px 0 0 1px" $c="#6b9fdc" $line="#c8c8c8" $align="flex-start" $justify="flex-start" $size={16}>lp</Cell>
          <Cell $h={42} $line="#c8c8c8" />
          <Cell $h={58} $align="flex-end" $justify="flex-start"><Dash /><GreenBar /></Cell>
          <Cell />
          <Cell $h={20} $pad="0 8px 0 0" $bg="#f1f1f1" $justify="space-between"><EdgeThumb /><EdgeArrow /></Cell>
          <Cell $h={50} $pad="0 5px 0 0" $bg="#241212" $justify="flex-end"><Rule $h={50} $c="#7d6f6f" /></Cell>
        </Strip>
        <Badge>3</Badge>
      </Desktop>
    </>
  );
}
